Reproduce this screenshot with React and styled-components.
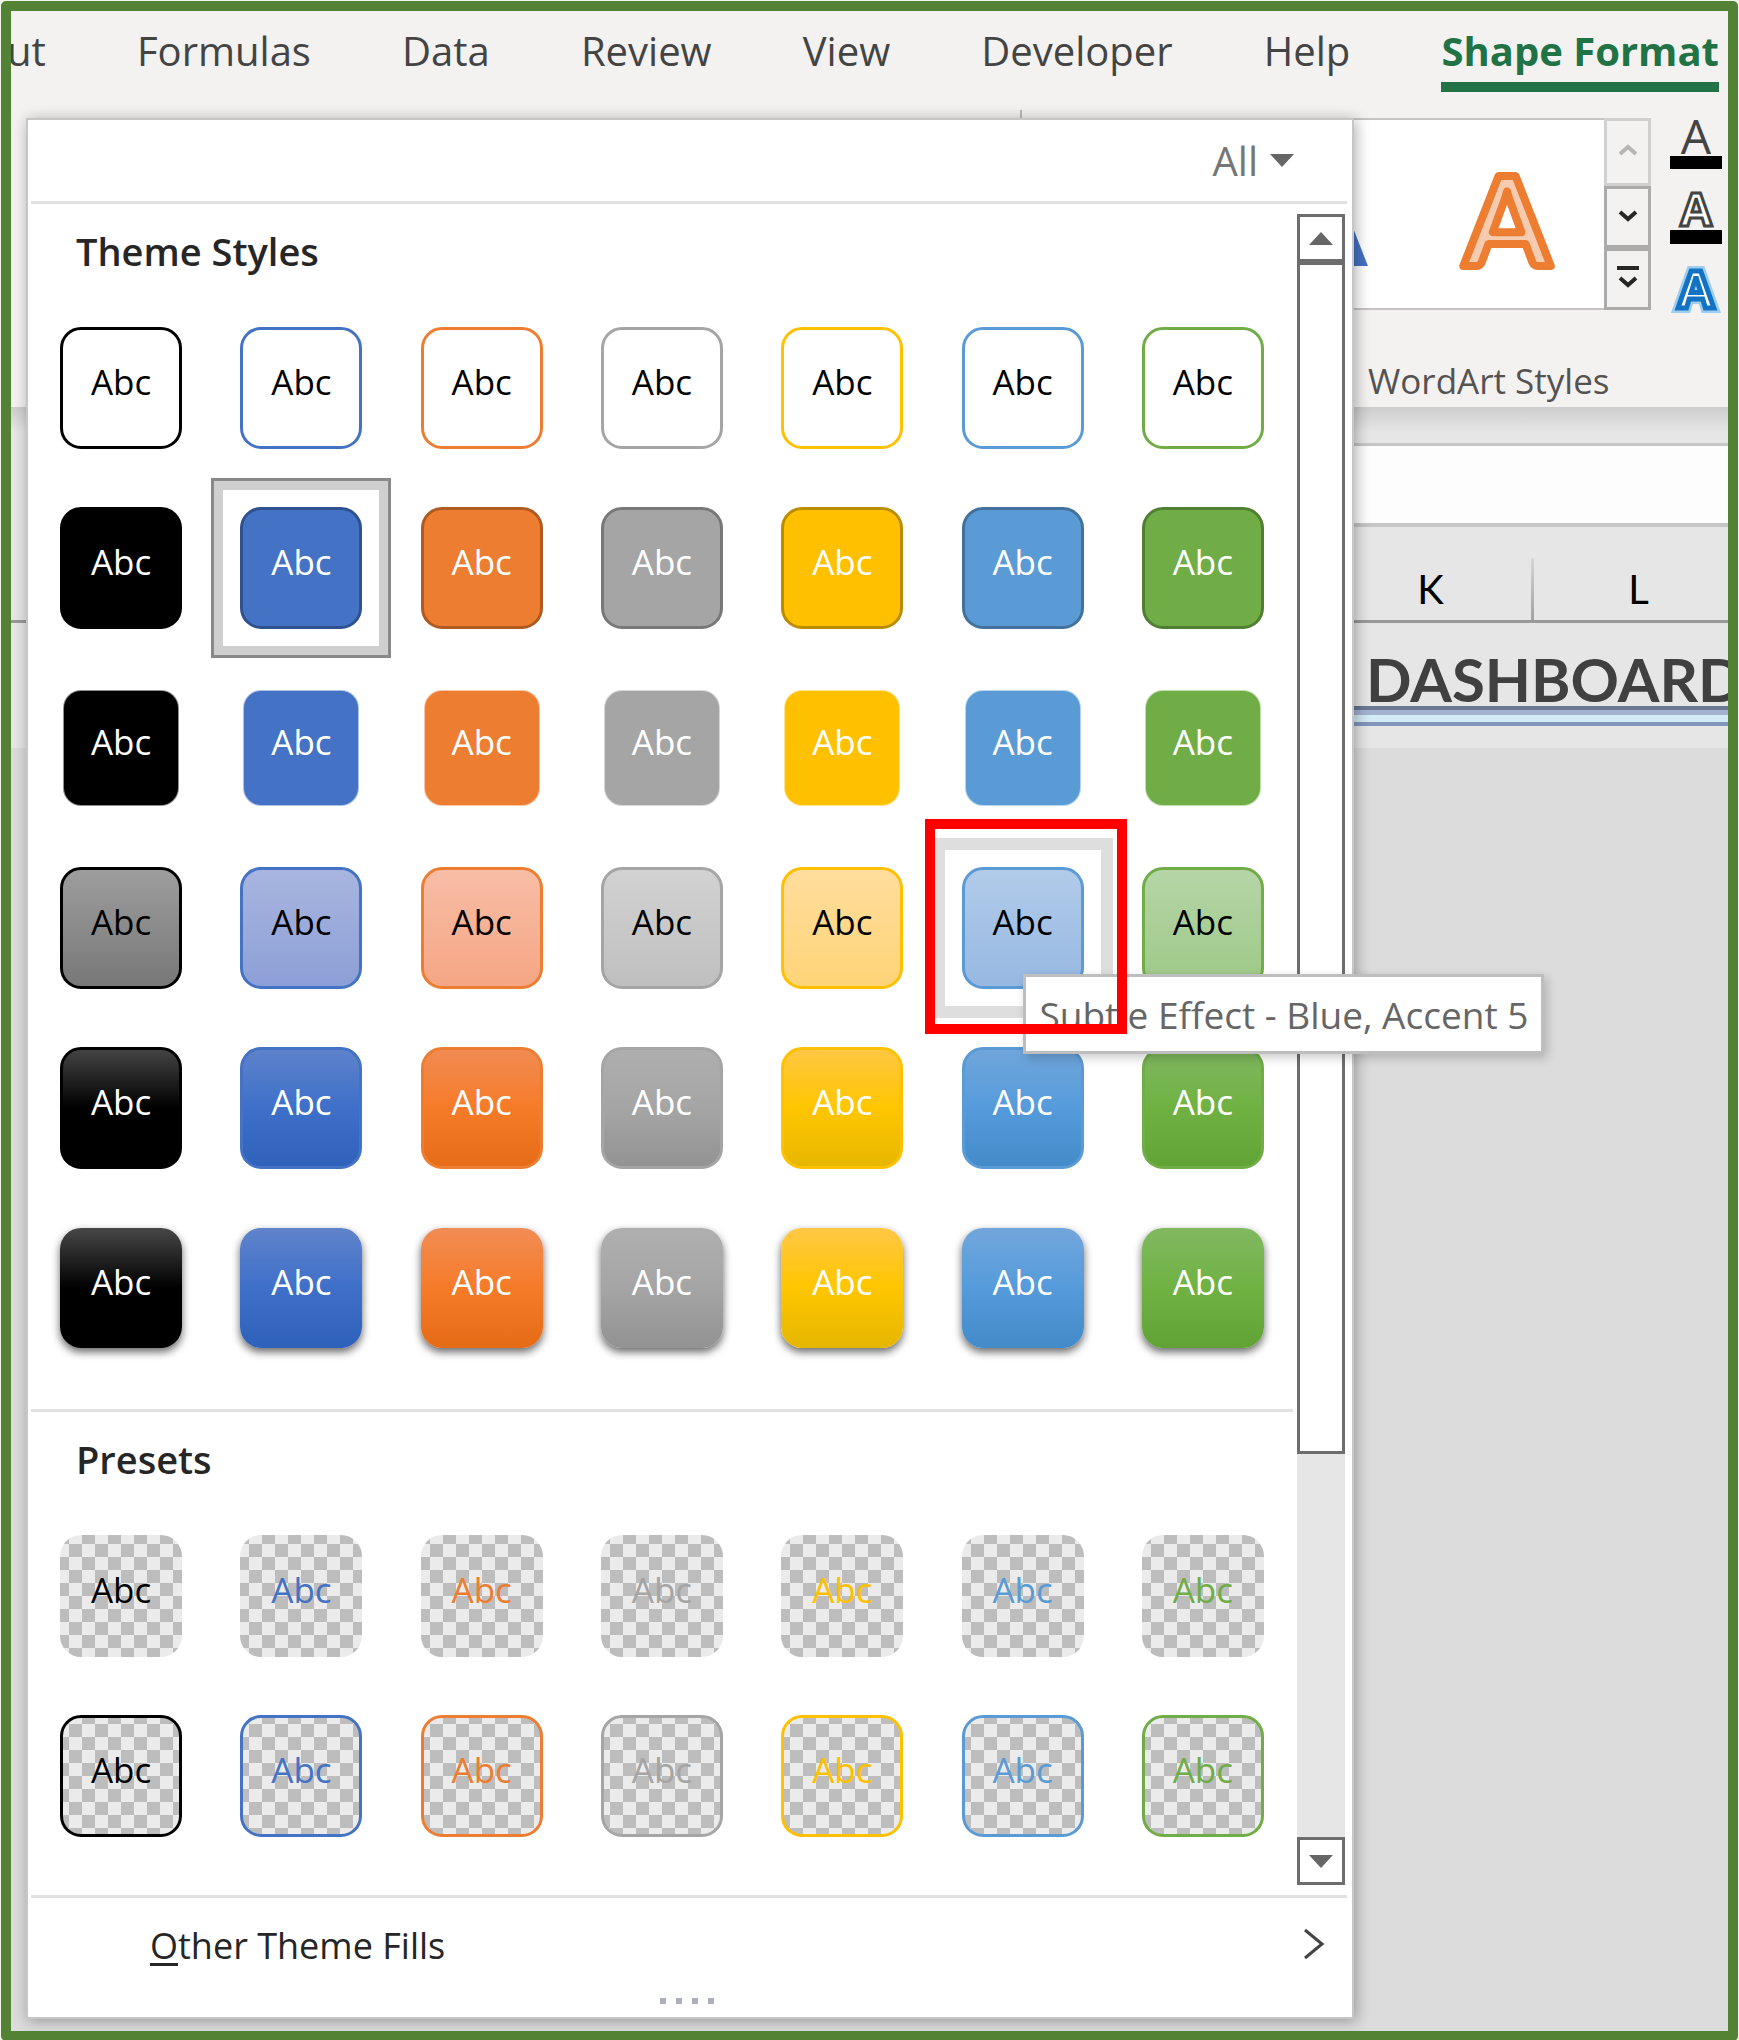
import React from 'react';
import styled, { createGlobalStyle, css } from 'styled-components';

const tabs = ['ut', 'Formulas', 'Data', 'Review', 'View', 'Developer', 'Help', 'Shape Format'];

const accents = [
    { name: 'Black, Dark 1', base: '#000000', edge: '#000000', soft: ['#9d9d9d', '#787878'], glow: ['#474747', '#000000', '#000000'] },
    { name: 'Blue, Accent 1', base: '#4472c4', edge: '#2f528f', soft: ['#a8b5df', '#8c9fd6'], glow: ['#6083cb', '#3e70ca', '#2e61ba'] },
    { name: 'Orange, Accent 2', base: '#ed7d31', edge: '#ae5a21', soft: ['#f8bda6', '#f5a684'], glow: ['#f18c55', '#f67b28', '#e56b17'] },
    { name: 'Gray, Accent 3', base: '#a5a5a5', edge: '#787878', soft: ['#d2d2d2', '#bfbfbf'], glow: ['#afafaf', '#a5a5a5', '#929292'] },
    { name: 'Gold, Accent 4', base: '#ffc000', edge: '#bc8c00', soft: ['#ffdd9c', '#ffd478'], glow: ['#ffc746', '#ffc600', '#e5b600'] },
    { name: 'Blue, Accent 5', base: '#5b9bd5', edge: '#41719c', soft: ['#b1cbe9', '#97b8e2'], glow: ['#71a6db', '#559bdb', '#438ac9'] },
    { name: 'Green, Accent 6', base: '#70ad47', edge: '#507e32', soft: ['#b5d5a7', '#9dc986'], glow: ['#81b861', '#6fb242', '#61a235'] },
];

const themeRows = [
    { kind: 'outline', label: 'Colored Outline' },
    { kind: 'fill', label: 'Colored Fill' },
    { kind: 'light', label: 'Light Outline' },
    { kind: 'subtle', label: 'Subtle Effect' },
    { kind: 'moderate', label: 'Moderate Effect' },
    { kind: 'intense', label: 'Intense Effect' },
];

const presetRows = [
    { kind: 'clear', label: 'Transparent' },
    { kind: 'clearOutline', label: 'Transparent, Colored Outline' },
];

function StyleGrid({ rows, selected, hovered }) {
    return (
        <Grid>
            {rows.map(row => accents.map(accent => {
                const title = `${row.label} - ${accent.name}`;
                const isHovered = title === hovered;

                return (
                    <Cell key={title}>
                        <Pick aria-label={title} $selected={title === selected} $hovered={isHovered}>
                            <Tile $kind={row.kind} $accent={accent}>Abc</Tile>
                        </Pick>
                        {isHovered && <Tooltip role="tooltip">{title}</Tooltip>}
                        {isHovered && <Marker />}
                    </Cell>
                );
            }))}
        </Grid>
    )
}

function Triangle({ down }) {
    return (
        <svg width="24" height="13" viewBox="0 0 24 13" aria-hidden="true">
            <path d={down ? 'M0 0h24L12 13z' : 'M0 13h24L12 0z'} fill="#666666" />
        </svg>
    )
}

function Chevron({ d, color }) {
    return (
        <svg width="24" height="26" viewBox="0 0 24 26" fill="none" stroke={color} strokeWidth="4" aria-hidden="true">
            <path d={d} />
        </svg>
    )
}

function StylesPanel() {
    return (
        <Panel>
            <PanelHeader>
                <Filter>All <Triangle down /></Filter>
            </PanelHeader>
            <ScrollArea>
                <Sections>
                    <Section>
                        <SectionTitle>Theme Styles</SectionTitle>
                        <StyleGrid
                            rows={themeRows}
                            selected="Colored Fill - Blue, Accent 1"
                            hovered="Subtle Effect - Blue, Accent 5"
                        />
                    </Section>
                    <Section>
                        <SectionTitle>Presets</SectionTitle>
                        <StyleGrid rows={presetRows} />
                    </Section>
                </Sections>
                <Scrollbar>
                    <ScrollButton aria-label="Scroll up"><Triangle /></ScrollButton>
                    <Thumb />
                    <Track />
                    <ScrollButton aria-label="Scroll down"><Triangle down /></ScrollButton>
                </Scrollbar>
            </ScrollArea>
            <PanelFooter>
                <OtherFills>
                    <span><u>O</u>ther Theme Fills</span>
                    <svg width="22" height="34" viewBox="0 0 22 34" fill="none" stroke="#444444" strokeWidth="3" aria-hidden="true">
                        <path d="M2 1l17 14L2 29" />
                    </svg>
                </OtherFills>
                <Grip><i /><i /><i /><i /></Grip>
            </PanelFooter>
        </Panel>
    )
}

function WordArtGroup() {
    return (
        <Group>
            <GroupRow>
                <Gallery>
                    <WordArt aria-label="Fill - Blue">
                        <svg width="120" height="120" viewBox="0 0 120 120">
                            <text x="61" y="112" textAnchor="middle" fontSize="136" fontWeight="700" fill="#4472c4">A</text>
                        </svg>
                    </WordArt>
                    <WordArt aria-label="Fill - Orange">
                        <svg width="120" height="120" viewBox="0 0 120 120">
                            <text x="58" y="112" textAnchor="middle" fontSize="124" fontWeight="700" fill="#f7cbb0" stroke="#ed7d31" strokeWidth="8" strokeLinejoin="round">A</text>
                        </svg>
                    </WordArt>
                </Gallery>
                <Spinner>
                    <SpinButton aria-label="Row up" $dim><Chevron d="M4 15l8-7 8 7" color="#b8b6b4" /></SpinButton>
                    <SpinButton aria-label="Row down"><Chevron d="M4 8l8 7 8-7" color="#262626" /></SpinButton>
                    <SpinButton aria-label="More"><Chevron d="M1 2h22M4 12l8 7 8-7" color="#262626" /></SpinButton>
                </Spinner>
                <TextTools>
                    <TextTool aria-label="Text Fill">
                        <svg width="52" height="52" viewBox="0 0 52 52">
                            <text x="26" y="36" textAnchor="middle" fontSize="48" fill="#444444">A</text>
                            <path d="M0 38h52v13H0z" />
                        </svg>
                    </TextTool>
                    <TextTool aria-label="Text Outline">
                        <svg width="52" height="54" viewBox="0 0 52 54">
                            <text x="26" y="35" textAnchor="middle" fontSize="46" fontWeight="700" fill="#ffffff" stroke="#444444" strokeWidth="3">A</text>
                            <path d="M0 39h52v14H0z" />
                        </svg>
                    </TextTool>
                    <TextTool aria-label="Text Effects">
                        <svg width="52" height="50" viewBox="0 0 52 50">
                            <g textAnchor="middle" fontSize="52" fontWeight="700">
                                <text x="26" y="42" fill="none" stroke="#9fcdf0" strokeWidth="10">A</text>
                                <text x="26" y="42" fill="#ffffff" stroke="#1273c5" strokeWidth="5">A</text>
                            </g>
                        </svg>
                    </TextTool>
                </TextTools>
            </GroupRow>
            <GroupLabel>WordArt Styles</GroupLabel>
        </Group>
    )
}

function App() {
    return (
        <>
            <GlobalStyle />
            <Frame>
                <Workbook>
                    <Ribbon>
                        <Tabs>
                            {tabs.map(tab => (
                                <Tab key={tab} $active={tab === 'Shape Format'}>{tab}</Tab>
                            ))}
                        </Tabs>
                        <RibbonBody>
                            <Separator />
                            <WordArtGroup />
                        </RibbonBody>
                    </Ribbon>
                    <RibbonShade />
                    <FormulaRow>
                        <FormulaBar aria-label="Formula bar" />
                    </FormulaRow>
                    <Columns>
                        <Column>K</Column>
                        <Column>L</Column>
                    </Columns>
                    <TitleRow>
                        <SheetTitle>DASHBOARD</SheetTitle>
                    </TitleRow>
                    <TitleRule />
                </Workbook>
                <StylesPanel />
            </Frame>
        </>
    )
}

export default App;

const GlobalStyle = createGlobalStyle`
    * {
        box-sizing: border-box;
    }

    body {
        margin: 0;
        background: #f1f5ee;
        font-family: 'Open Sans', 'Noto Sans', sans-serif;
    }

    button {
        margin: 0;
        padding: 0;
        font: inherit;
        color: inherit;
        background: none;
        border: none;
        cursor: pointer;
    }

    svg {
        display: block;
        overflow: visible;
    }
`;

// the open menu shares one grid cell with the workbook, so it lies on top of it
const Frame = styled.div`
    display: grid;
    margin: 1px;
    border: 10px solid #548235;
    border-radius: 5px;
    overflow: hidden;

    & > * {
        grid-area: 1 / 1;
        min-width: 0;
    }
`;

const Workbook = styled.div`
    background: #dcdcdc;
    overflow: hidden;
`;

const Ribbon = styled.div`
    height: 396px;
    background: #f3f2f1;
`;

const Tabs = styled.nav`
    display: flex;
    justify-content: space-between;
    height: 99px;
    margin-left: -4px;
    padding: 13px 9px 0 0;
`;

const Tab = styled.button`
    height: 68px;
    font-size: 40px;
    line-height: 54px;
    white-space: nowrap;
    color: #444444;
    padding-bottom: 4px;
    border-bottom: 10px solid transparent;

    ${props => props.$active && css`
        font-weight: 700;
        color: #217346;
        border-color: #217346;
    `}
`;

const RibbonBody = styled.div`
    display: flex;
    justify-content: flex-end;
    padding-right: 6px;
`;

const Separator = styled.div`
    width: 2px;
    height: 280px;
    margin-right: 200px;
    background: #bdbbb9;
`;

const Group = styled.div`
    display: flex;
    flex-direction: column;
    padding-top: 8px;
`;

const GroupRow = styled.div`
    display: flex;
    height: 192px;
`;

const Gallery = styled.div`
    display: flex;
    background: #ffffff;
    border: 2px solid #c6c4c2;
    border-right: none;
`;

const WordArt = styled.button`
    display: flex;
    align-items: center;
    justify-content: center;
    width: 190px;
    font-family: 'Lato', sans-serif;
`;

const Spinner = styled.div`
    display: flex;
    flex-direction: column;
    width: 47px;
    margin-right: 19px;
`;

const SpinButton = styled.button`
    flex: ${props => props.$dim ? 11 : 10};
    display: flex;
    align-items: center;
    justify-content: center;
    border: 3px solid ${props => props.$dim ? '#d2d0ce' : '#adabaa'};
`;

const TextTools = styled.div`
    display: flex;
    flex-direction: column;
    gap: 21px;
`;

const TextTool = styled.button`
    width: 52px;
`;

const GroupLabel = styled.div`
    padding: 48px 0 0 146px;
    font-size: 35px;
    line-height: 46px;
    color: #555352;
`;

const RibbonShade = styled.div`
    height: 36px;
    background: linear-gradient(#cdcdcd, #e6e6e6 70%);
`;

const FormulaRow = styled.div`
    padding-left: 40px;
    background: #e6e6e6;
`;

const FormulaBar = styled.input`
    display: block;
    width: 100%;
    height: 84px;
    padding: 0 20px;
    border: solid #c6c6c6;
    border-width: 3px 0 4px;
    outline: none;
    background: #fdfdfd;
`;

const Columns = styled.div`
    display: flex;
    justify-content: flex-end;
    align-items: flex-end;
    height: 96px;
    margin-right: -14px;
    background: #e6e6e6;
    border-bottom: 3px solid #999999;
`;

const Column = styled.div`
    width: 208px;
    height: 62px;
    padding-left: 4px;
    border-right: 3px solid;
    border-image: linear-gradient(#d8d8d8, #a0a0a0) 1;
    font-family: 'Lato', sans-serif;
    font-size: 40px;
    line-height: 62px;
    text-align: center;
    color: #000000;
`;

const TitleRow = styled.div`
    display: flex;
    justify-content: flex-end;
    height: 83px;
    background: #e6e6e6;
`;

const SheetTitle = styled.div`
    width: 362px;
    font-family: 'Lato', sans-serif;
    font-size: 60px;
    font-weight: 700;
    line-height: 112px;
    white-space: nowrap;
    color: #404040;
`;

const TitleRule = styled.div`
    height: 42px;
    padding-left: 40px;
    background: linear-gradient(
        #6a7894 0 4px,
        #a3b2d0 4px 9px,
        #d3ebf4 9px 16px,
        #8296bd 16px 20px,
        #e6e6e6 20px
    ) content-box, #e6e6e6;
`;

const Panel = styled.div`
    position: relative;
    margin: 107px 374px 12px 15px;
    background: #ffffff;
    border: 2px solid #c6c6c6;
    box-shadow: 2px 2px 14px rgba(0, 0, 0, .32);
`;

const PanelHeader = styled.div`
    display: flex;
    justify-content: flex-end;
    align-items: center;
    height: 84px;
    margin: 0 5px 0 3px;
    padding-right: 53px;
    border-bottom: 3px solid #e1e1e1;
`;

const Filter = styled.button`
    display: flex;
    align-items: center;
    gap: 12px;
    font-size: 40px;
    line-height: 54px;
    color: #767676;
`;

const ScrollArea = styled.div`
    display: flex;
    gap: 4px;
    padding: 0 7px 0 3px;
`;

const Sections = styled.div`
    flex: 1;
`;

const Section = styled.section`
    padding-bottom: 31px;

    & + & {
        padding-bottom: 29px;
        border-top: 3px solid #e1e1e1;
    }
`;

const SectionTitle = styled.h2`
    height: 94px;
    margin: 0;
    padding: 21px 0 0 45px;
    font-size: 38px;
    font-weight: 600;
    line-height: 52px;
    color: #262626;
`;

const Grid = styled.div`
    display: grid;
    grid-template-columns: repeat(7, 1fr);
    grid-auto-rows: 180px;
`;

const Cell = styled.div`
    position: relative;
    display: flex;
    justify-content: center;
`;

const Pick = styled.button`
    display: flex;
    align-items: center;
    justify-content: center;
    width: 180px;

    ${props => props.$hovered && css`
        box-shadow: inset 0 0 0 12px #dedede;
    `}

    ${props => props.$selected && css`
        box-shadow: inset 0 0 0 3px #898989, inset 0 0 0 12px #cfcfcf;
    `}
`;

const checker = css`
    background: conic-gradient(#bdbdbd 25%, #ebebeb 0 50%, #bdbdbd 0 75%, #ebebeb 0) -4px 9px / 26px 26px border-box;
`;

const tileKinds = {
    outline: a => css`
        background: #ffffff;
        border-color: ${a.base};
    `,
    fill: a => css`
        color: #ffffff;
        background: ${a.base};
        border-color: ${a.edge};
    `,
    light: a => css`
        width: 114px;
        height: 114px;
        color: #ffffff;
        background: ${a.base};
        border: none;
        border-radius: 17px;
        box-shadow: 0 0 0 1px ${a.base}70;
    `,
    subtle: a => css`
        background: linear-gradient(${a.soft.join(', ')});
        border-color: ${a.base};
    `,
    moderate: a => css`
        color: #ffffff;
        background: linear-gradient(${a.glow.join(', ')}) border-box;
        border-color: ${a.base};
    `,
    intense: a => css`
        height: 120px;
        color: #ffffff;
        background: linear-gradient(${a.glow.join(', ')}) border-box;
        border-color: transparent;
        box-shadow: 0 4px 9px rgba(0, 0, 0, .6);
    `,
    clear: a => css`
        ${checker}
        color: ${a.base};
        border-color: transparent;
    `,
    clearOutline: a => css`
        ${checker}
        color: ${a.base};
        border-color: ${a.base};
    `,
};

const Tile = styled.span`
    display: flex;
    align-items: center;
    justify-content: center;
    width: 122px;
    height: 122px;
    padding-bottom: 12px;
    font-size: 35px;
    font-weight: 500;
    line-height: 46px;
    color: #000000;
    border: 3px solid;
    border-radius: 21px;

    ${props => tileKinds[props.$kind](props.$accent)}
`;

const Tooltip = styled.div`
    position: absolute;
    top: 136px;
    left: 91px;
    z-index: 1;
    height: 80px;
    padding: 12px 13px 0;
    font-size: 37px;
    line-height: 52px;
    white-space: nowrap;
    color: #666666;
    background: #ffffff;
    border: 3px solid #bebebe;
    box-shadow: 3px 4px 10px rgba(0, 0, 0, .2);
`;

const Marker = styled.div`
    position: absolute;
    inset: -19px -14px -16px -7px;
    z-index: 2;
    border: 10px solid #ff0000;
    pointer-events: none;
`;

const Scrollbar = styled.div`
    display: flex;
    flex-direction: column;
    width: 48px;
    margin: 10px 0;
`;

const ScrollButton = styled.button`
    display: flex;
    align-items: center;
    justify-content: center;
    height: 48px;
    background: #ffffff;
    border: 3px solid #6d6d6d;
`;

const Thumb = styled.div`
    flex: 1191;
    background: #ffffff;
    border: 3px solid #6d6d6d;
`;

const Track = styled.div`
    flex: 384;
    background: #e6e6e6;
`;

const PanelFooter = styled.div`
    margin: 0 5px 0 3px;
    border-top: 3px solid #e1e1e1;
`;

const OtherFills = styled.button`
    display: flex;
    align-items: center;
    justify-content: space-between;
    width: 100%;
    height: 100px;
    padding: 0 22px 4px 119px;
    font-size: 36px;
    line-height: 50px;
    color: #262626;

    u {
        text-decoration-thickness: 3px;
        text-underline-offset: 4px;
    }
`;

const Grip = styled.div`
    display: flex;
    justify-content: center;
    gap: 10px;
    height: 19px;
    padding-right: 5px;

    i {
        width: 6px;
        height: 6px;
        background: #a9b0b8;
    }
`;
